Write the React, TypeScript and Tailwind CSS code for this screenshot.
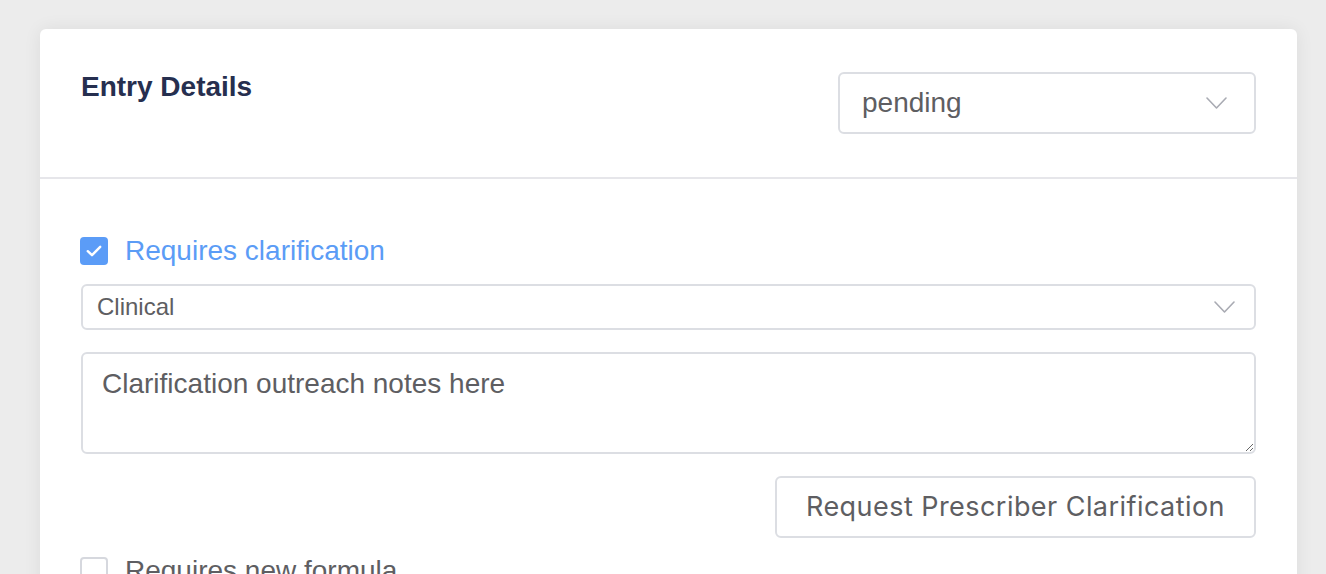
import React from "react";

function Chevron({ w, h }: { w: number; h: number }) {
  return (
    <svg width={w} height={h} viewBox={`0 0 ${w} ${h}`} fill="none">
      <path d={`M1 1 L${w / 2} ${h - 1} L${w - 1} 1`} stroke="#a9abb3" strokeWidth="1.6" strokeLinecap="round" strokeLinejoin="round" />
    </svg>
  );
}

export default function App() {
  return (
    <div className="min-h-[574px] w-full overflow-hidden bg-[#ececec] pt-[29px] [font-family:'Liberation_Sans',Arial,sans-serif]">
      <div className="ml-[40px] w-[1257px] rounded-[6px] bg-white shadow-[0_0_18px_rgba(0,0,0,0.07)]">
        {/* header */}
        <div className="flex items-start justify-between border-b-2 border-[#e6e6ea] px-[41px] pt-[42px] pb-[43px]">
          <h2 className="text-[28px] leading-[32px] font-bold text-[#262f4f]">Entry Details</h2>
          <div className="mt-[1px] flex h-[62px] w-[418px] items-center justify-between rounded-[6px] border-2 border-[#dcdee3] pl-[22px] pr-[27px]">
            <span className="text-[28px] text-[#5e5e62]">pending</span>
            <Chevron w={21} h={12} />
          </div>
        </div>
        {/* body */}
        <div className="px-[41px] pt-[56px] pb-[20px]">
          <div className="-ml-[1px] flex h-[32px] items-center gap-[17px]">
            <div className="flex h-[28px] w-[28px] items-center justify-center rounded-[4px] bg-[#5b9cf7]">
              <svg width="16" height="12" viewBox="0 0 16 12" fill="none">
                <path d="M1.8 6.2 L6 10.2 L14.2 1.8" stroke="white" strokeWidth="2.4" strokeLinecap="round" strokeLinejoin="round" />
              </svg>
            </div>
            <span className="text-[28px] leading-[32px] text-[#5b9cf6]">Requires clarification</span>
          </div>
          <div className="mt-[17px] flex h-[46px] items-center justify-between rounded-[6px] border-2 border-[#dcdee3] pl-[14px] pr-[19px]">
            <span className="text-[24px] text-[#5e5e62]">Clinical</span>
            <Chevron w={21} h={12} />
          </div>
          <textarea
            className="mt-[22px] block h-[102px] w-full rounded-[6px] border-2 border-[#dcdee3] px-[19px] pt-[14px] text-[28px] leading-[32px] text-[#5e5e62] outline-none"
            defaultValue="Clarification outreach notes here"
          />
          <div className="mt-[22px] flex justify-end">
            <button className="flex h-[62px] w-[481px] items-center justify-center rounded-[6px] border-2 border-[#dcdee3] bg-white text-[27px] tracking-[0.45px] text-[#5e5e62] [font-family:Inter,'Liberation_Sans',sans-serif]">
              Request Prescriber Clarification
            </button>
          </div>
          <div className="-ml-[1px] mt-[17px] flex h-[32px] items-center gap-[17px]">
            <div className="h-[28px] w-[28px] rounded-[4px] border-2 border-[#d6d8de] bg-white" />
            <span className="text-[28px] leading-[32px] text-[#5e5e62]">Requires new formula</span>
          </div>
        </div>
      </div>
    </div>
  );
}
